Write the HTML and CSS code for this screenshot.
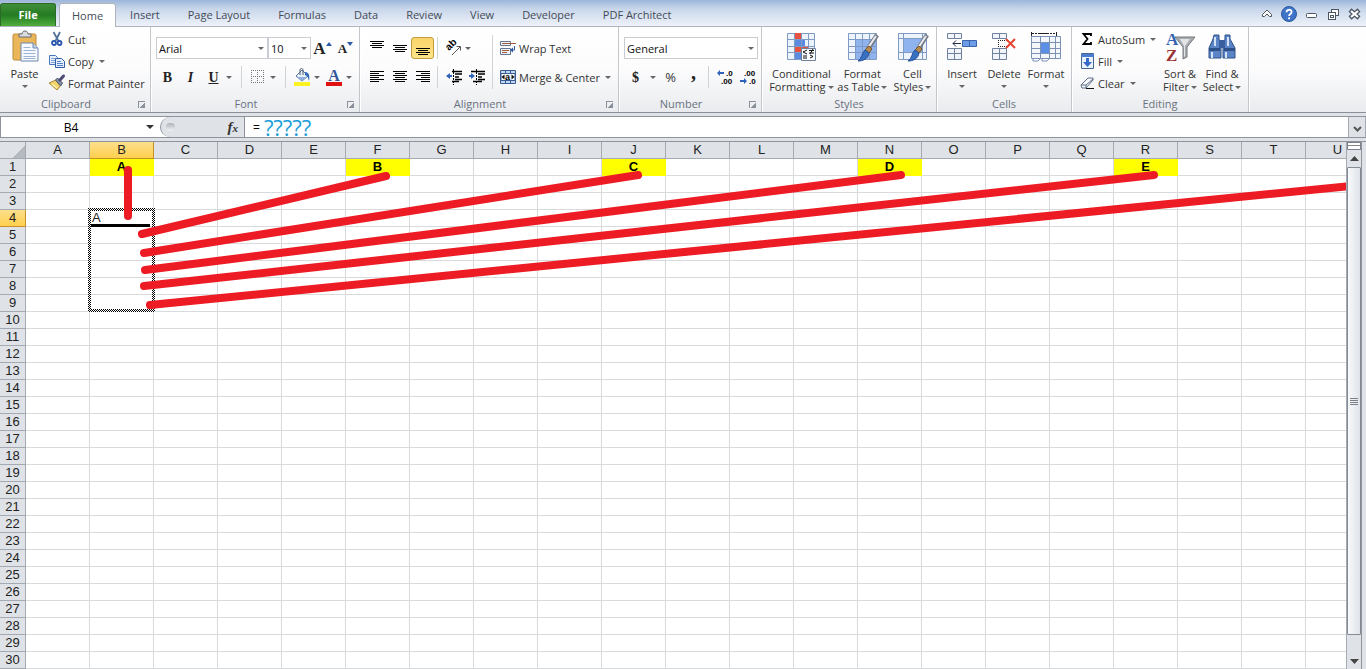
FILE: index.html
```html
<!DOCTYPE html>
<html lang="en">
<head>
    <meta charset="UTF-8">
    <meta name="viewport" content="width=device-width, initial-scale=1.0">
    <title>Spreadsheet</title>
    <link rel="stylesheet" href="styles.css">
</head>
<body>
    <!-- Tabs -->
    <nav class="tabs">
        <button class="file">File</button>
        <button class="tab active">Home</button>
        <button class="tab">Insert</button>
        <button class="tab">Page Layout</button>
        <button class="tab">Formulas</button>
        <button class="tab">Data</button>
        <button class="tab">Review</button>
        <button class="tab">View</button>
        <button class="tab">Developer</button>
        <button class="tab">PDF Architect</button>
        <div class="window-tools">
            <button aria-label="Minimize ribbon"><svg width="16" height="16" viewBox="0 0 16 16"><path d="M3.500 8.500L8 4l4.500 4.500v2h-2L8 8l-2.500 2.500h-2z" fill="#fff" stroke="#4c5663"/></svg></button>
            <button aria-label="Help"><svg width="16" height="16" viewBox="0 0 16 16"><circle cx="8" cy="8" r="7.500" fill="#3f74c9" stroke="#2b57a0"/><path d="M5.500 6.200C5.500 3 10.600 3 10.600 6c0 2-2.500 2-2.500 4" fill="none" stroke="#fff" stroke-width="1.800"/><circle cx="8.100" cy="12.300" r="1.100" fill="#fff"/></svg></button>
            <button aria-label="Minimize"><svg width="16" height="16" viewBox="0 0 16 16"><rect x="3.500" y="7.500" width="10" height="4" rx="1" fill="#fff" stroke="#4c5663"/></svg></button>
            <button aria-label="Restore"><svg width="16" height="16" viewBox="0 0 16 16"><rect x="6.500" y="3.500" width="7" height="6" fill="#fff" stroke="#4c5663"/><rect x="3.500" y="6.500" width="7" height="7" fill="#fff" stroke="#4c5663"/><rect x="5.500" y="9.500" width="3" height="2" fill="none" stroke="#4c5663"/></svg></button>
            <button aria-label="Close"><svg width="16" height="16" viewBox="0 0 16 16"><path d="M3 4l9 8M12 4l-9 8" stroke="#4c5663" stroke-width="4.500"/><path d="M4 5l7 6M11 5l-7 6" stroke="#fff" stroke-width="2.200"/></svg></button>
        </div>
    </nav>

    <!-- Ribbon -->
    <div class="ribbon">
        <section class="group clipboard">
            <div class="group-body">
                <button class="big paste">
                    <svg width="32" height="32" viewBox="0 0 32 32"><rect x="4" y="3" width="23" height="26" rx="1.500" fill="#eab65a" stroke="#bd8a38"/><path d="M10 6V3h3c0-4 6-4 6 0h3v3z" fill="#d9dde2" stroke="#686d75"/><path d="M12 12h12l5 5v13H12z" fill="#f6faff" stroke="#6c87ae"/><path d="M24 12v5h5" fill="#c3d4ec" stroke="#6c87ae"/><path d="M14.500 16.500h7M14.500 19.500h12M14.500 22.500h12M14.500 25.500h12M14.500 27.500h12" stroke="#9cb3d3"/></svg>
                    <span>Paste</span><i class="caret"></i>
                </button>
                <div class="stack">
                    <button class="small"><svg width="16" height="16" viewBox="0 0 16 16"><path d="M4.500 1l5 9M11 1L6.500 10" stroke="#53749f" stroke-width="1.800"/><circle cx="5" cy="12" r="2" fill="none" stroke="#2854ad" stroke-width="1.800"/><circle cx="10.500" cy="12" r="2" fill="none" stroke="#2854ad" stroke-width="1.800"/></svg>Cut</button>
                    <button class="small"><svg width="16" height="16" viewBox="0 0 16 16"><path d="M.5 2.500h6l2 2v7h-8z" fill="#e6f0fd" stroke="#4a74b8"/><path d="M2 5.500h4M2 7.500h4M2 9.500h4" stroke="#7fa2d8"/><path d="M6.500 5.500h6l3 3v6h-9z" fill="#e6f0fd" stroke="#2f5da6"/><path d="M8 8.500h4M8 10.500h6M8 12.500h6" stroke="#5683c8"/></svg>Copy<i class="caret"></i></button>
                    <button class="small"><svg width="16" height="16" viewBox="0 0 16 16"><path d="M0 8l7-3 5 5-4 5z" fill="#f3d567" stroke="#a7883a"/><path d="M3 9l5 4" stroke="#fff3b5" stroke-width="1.500"/><path d="M6.500 5l2-2 5 5-2 3z" fill="#8490a5" stroke="#48546b"/><path d="M11 5l3.500-4" stroke="#4e4a76" stroke-width="3" stroke-linecap="round"/></svg>Format Painter</button>
                </div>
            </div>
            <h2>Clipboard</h2><button class="launcher" aria-label="Clipboard options"></button>
        </section>

        <section class="group font">
            <div class="group-body rows">
                <div class="row">
                    <label class="combo font-name"><select aria-label="Font"><option>Arial</option></select><i class="caret"></i></label>
                    <label class="combo font-size"><select aria-label="Font size"><option>10</option></select><i class="caret"></i></label>
                    <button class="tool serif grow" aria-label="Grow font">A<svg width="6" height="4" viewBox="0 0 6 4"><path d="M0 4l3-4 3 4z" fill="#2d5aa8"/></svg></button>
                    <button class="tool serif shrink" aria-label="Shrink font">A<svg width="6" height="4" viewBox="0 0 6 4"><path d="M0 0l3 4 3-4z" fill="#2d5aa8"/></svg></button>
                </div>
                <div class="row">
                    <button class="tool serif"><b>B</b></button>
                    <button class="tool serif"><em>I</em></button>
                    <button class="tool serif"><u>U</u></button>
                    <i class="caret"></i>
                    <span class="sep"></span>
                    <button class="tool" aria-label="Borders"><svg width="14" height="14" viewBox="0 0 14 14"><path d="M.5 0v14M6.500 0v14M12.500 0v14M0 .5h14M0 6.500h14M0 12.500h14" stroke="#777" stroke-dasharray="1 1"/></svg></button>
                    <i class="caret"></i>
                    <span class="sep"></span>
                    <button class="tool" aria-label="Fill color"><svg width="18" height="18" viewBox="0 0 18 18"><path d="M3 8l6-6 6 6-6 5z" fill="#e8eff9" stroke="#56749f"/><path d="M5 9h9l-5 4z" fill="#8eafdf"/><path d="M7 7V2c0-2 3-2 3 0v5" fill="none" stroke="#4d5b70"/><path d="M12 4c4 0 5 4 4 9-1-3-1-5-4-6z" fill="#2e65b8"/><path d="M1 14h16v4H1z" fill="#fbf223"/></svg></button>
                    <i class="caret"></i>
                    <button class="tool serif font-color" aria-label="Font color">A</button>
                    <i class="caret"></i>
                </div>
            </div>
            <h2>Font</h2><button class="launcher" aria-label="Font options"></button>
        </section>

        <section class="group alignment">
            <div class="group-body">
                <div class="rows">
                    <div class="row">
                        <button class="tool" aria-label="Top align"><svg width="16" height="16" viewBox="0 0 16 16"><path d="M1 1.500h14M3 3.500h10M1 5.500h14M3 7.500h10" stroke="#000"/></svg></button>
                        <button class="tool" aria-label="Middle align"><svg width="16" height="16" viewBox="0 0 16 16"><path d="M1 5.500h14M3 7.500h10M1 9.500h14M3 11.500h10" stroke="#000"/></svg></button>
                        <button class="tool pressed" aria-label="Bottom align"><svg width="16" height="16" viewBox="0 0 16 16"><path d="M1 8.500h14M3 10.500h10M1 12.500h14M3 14.500h10" stroke="#000"/></svg></button>
                        <span class="sep"></span>
                        <button class="tool" aria-label="Orientation"><svg width="16" height="16" viewBox="0 0 16 16"><text x="3" y="11" transform="rotate(-45 3 11)" class="ab">ab</text><path d="M6 15l8-8M10.500 6.500H14.500V10.500" fill="none" stroke="#555"/></svg></button>
                        <i class="caret"></i>
                    </div>
                    <div class="row">
                        <button class="tool" aria-label="Align left"><svg width="16" height="16" viewBox="0 0 16 16"><path d="M1 2.500h14M1 4.500h9M1 6.500h14M1 8.500h9M1 10.500h14M1 12.500h9" stroke="#000"/></svg></button>
                        <button class="tool" aria-label="Center"><svg width="16" height="16" viewBox="0 0 16 16"><path d="M1 2.500h14M3 4.500h10M1 6.500h14M3 8.500h10M1 10.500h14M3 12.500h10" stroke="#000"/></svg></button>
                        <button class="tool" aria-label="Align right"><svg width="16" height="16" viewBox="0 0 16 16"><path d="M1 2.500h14M6 4.500h9M1 6.500h14M6 8.500h9M1 10.500h14M6 12.500h9" stroke="#000"/></svg></button>
                        <span class="sep"></span>
                        <button class="tool" aria-label="Decrease indent"><svg width="16" height="16" viewBox="0 0 16 16"><path d="M7.500 0v16" stroke="#000" stroke-dasharray="2 1"/><path d="M6 2.500h10M9 5h7M9 8h4M9 10.500h7M6 12.500h7" stroke="#000" stroke-width="1.500"/><path d="M0 7l4-3v2h2v2H4v2z" fill="#2f62bd"/></svg></button>
                        <button class="tool" aria-label="Increase indent"><svg width="16" height="16" viewBox="0 0 16 16"><path d="M7.500 0v16" stroke="#000" stroke-dasharray="2 1"/><path d="M2 2.500h14M9 5h7M9 8h4M9 10.500h7M4 12.500h9" stroke="#000" stroke-width="1.500"/><path d="M6 7L2 4v2H0v2h2v2z" fill="#2f62bd"/></svg></button>
                    </div>
                </div>
                <span class="sep tall"></span>
                <div class="rows">
                    <div class="row"><button class="small"><svg width="16" height="16" viewBox="0 0 16 16"><path d="M.5 1.500h10v4H.5zM.5 8.500h10v6H.5z" fill="#eef3fa" stroke="#64758f"/><path d="M2 3.500h14M2 10.500h7M2 12.500h5" stroke="#a45b39"/><path d="M14.500 6v4h-2" fill="none" stroke="#2b59a5"/><path d="M13 7.500v5L10 10z" fill="#2b59a5"/></svg>Wrap Text</button></div>
                    <div class="row"><button class="small"><svg width="16" height="16" viewBox="0 0 16 16"><path d="M.5 1.500h15v13H.5z" fill="#c5d8f3" stroke="#385b91"/><path d="M5.500 1v3M10.500 1v3M5.500 12v3M10.500 12v3" stroke="#385b91"/><path d="M1 4.500h14v7H1z" fill="#f7faff" stroke="#385b91"/><path d="M1.500 8l3-2.500v5zM14.500 8l-3-2.500v5z" fill="#111"/><text x="5" y="11" class="mini">a</text></svg>Merge &amp; Center<i class="caret"></i></button></div>
                </div>
            </div>
            <h2>Alignment</h2><button class="launcher" aria-label="Alignment options"></button>
        </section>

        <section class="group number">
            <div class="group-body rows">
                <div class="row"><label class="combo format"><select aria-label="Number format"><option>General</option></select><i class="caret"></i></label></div>
                <div class="row">
                    <button class="tool serif"><b>$</b></button>
                    <i class="caret"></i>
                    <button class="tool percent">%</button>
                    <button class="tool serif comma"><b>,</b></button>
                    <span class="sep"></span>
                    <button class="tool" aria-label="Increase decimal"><svg width="16" height="16" viewBox="0 0 16 16"><text x="9" y="7" class="dec">.0</text><text x="4" y="15" class="dec">.00</text><path d="M0 4l3-3v2h4v2H3v2z" fill="#2f62bd"/></svg></button>
                    <button class="tool" aria-label="Decrease decimal"><svg width="16" height="16" viewBox="0 0 16 16"><text x="4" y="7" class="dec">.00</text><text x="9" y="15" class="dec">.0</text><path d="M7 12L4 9v2H0v2h4v2z" fill="#2f62bd"/></svg></button>
                </div>
            </div>
            <h2>Number</h2><button class="launcher" aria-label="Number options"></button>
        </section>

        <section class="group styles">
            <div class="group-body">
                <button class="big">
                    <svg width="32" height="32" viewBox="0 0 32 32"><path d="M2.500 2.500h27v26h-27z" fill="#eef4fc" stroke="#7f9bc4"/><path d="M9 2h7v6H9zM9 15h14v6H9z" fill="#e8503f"/><path d="M9 8h11v7H9zM9 21h7v7H9z" fill="#5b8be0"/><path d="M9.500 2v26M16.500 2v26M23.500 2v26M2 8.500h27M2 15.500h27M2 21.500h27" stroke="#7f9bc4"/><path d="M16.500 17.500h14v12h-14z" fill="#fbfcfe" stroke="#6e7f99"/><path d="M22 19l-4 2 4 2M18 25h4M24 19.500h5M24 22h5M28 18l-3 5M25 24l3 1.500-3 1.500M18 27h4" fill="none" stroke="#111"/></svg>
                    <span>Conditional</span><span>Formatting<i class="caret"></i></span>
                </button>
                <button class="big">
                    <svg width="32" height="32" viewBox="0 0 32 32"><path d="M2.500 2.500h28v26h-28z" fill="#edf4fd" stroke="#7f9bc4"/><path d="M9 9h21v19H9z" fill="#8fb3ee"/><path d="M9.500 2v26M16.500 2v26M23.500 2v26M2 8.500h28M2 15.500h28M2 21.500h28" stroke="#7f9bc4"/><path d="M31 4L22 18" stroke="#747a83" stroke-width="4.500"/><path d="M30 5L22 17" stroke="#eceff3" stroke-width="2"/><path d="M23 15l3 3-3 4-4-3z" fill="#b98949" stroke="#75562e"/><path d="M19 19l4 3c-1 6-6 8-11 8 4-2 4-9 7-11z" fill="#3a70c2" stroke="#24509a"/></svg>
                    <span>Format</span><span>as Table<i class="caret"></i></span>
                </button>
                <button class="big">
                    <svg width="32" height="32" viewBox="0 0 32 32"><path d="M2.500 2.500h28v26h-28z" fill="#edf4fd" stroke="#7f9bc4"/><path d="M7.500 7.500h19v14h-19z" fill="#8fb3ee"/><path d="M7.500 2v26M26.500 2v26M2 7.500h28M2 21.500h28" stroke="#7f9bc4"/><path d="M31 4L22 18" stroke="#747a83" stroke-width="4.500"/><path d="M30 5L22 17" stroke="#eceff3" stroke-width="2"/><path d="M23 15l3 3-3 4-4-3z" fill="#b98949" stroke="#75562e"/><path d="M19 19l4 3c-1 6-6 8-11 8 4-2 4-9 7-11z" fill="#3a70c2" stroke="#24509a"/></svg>
                    <span>Cell</span><span>Styles<i class="caret"></i></span>
                </button>
            </div>
            <h2>Styles</h2>
        </section>

        <section class="group cells">
            <div class="group-body">
                <button class="big">
                    <svg width="32" height="32" viewBox="0 0 32 32"><path d="M1.500 2.500h14v5h-14zM1.500 17.500h14v11h-14zM8.500 2v6M8.500 17v11M2 22.500h13" fill="#f1f5fb" stroke="#6f819d"/><path d="M16.500 9.500h14v6h-14zM23.500 9v6" fill="#6c9be8" stroke="#3b65aa"/><path d="M7 12.500h8M10 9.500l-3 3 3 3" fill="none" stroke="#1d2b44"/></svg>
                    <span>Insert</span><i class="caret"></i>
                </button>
                <button class="big">
                    <svg width="32" height="32" viewBox="0 0 32 32"><path d="M4.500 2.500h14v5h-14zM4.500 17.500h14v11h-14zM11.500 2v6M11.500 17v11M5 22.500h13" fill="#f1f5fb" stroke="#6f819d"/><path d="M10 9.500h9M10 15.500h9M10.500 9v6" stroke="#222" stroke-dasharray="1 1"/><path d="M18 8l9 9M27 8l-9 9" stroke="#e5432f" stroke-width="2"/></svg>
                    <span>Delete</span><i class="caret"></i>
                </button>
                <button class="big">
                    <svg width="32" height="32" viewBox="0 0 32 32"><path d="M1.500 5.500h29v22h-29z" fill="#f4f8fd" stroke="#7b91b5"/><path d="M10 11h9v12h-9z" fill="#5c8fe6"/><path d="M10.500 5v22M19.500 5v22M25.500 5v22M2 11.500h28M2 17.500h8M19 17.500h11M2 22.500h28" stroke="#7b91b5"/><path d="M1.500 1v4M26.500 1v4M9 2.500h10" stroke="#222"/><path d="M2 2.500h24" stroke="#222" stroke-dasharray="2 1"/><path d="M3 28v2h5l2-2M12 28v2h5l2-2" fill="#fff" stroke="#7b91b5"/></svg>
                    <span>Format</span><i class="caret"></i>
                </button>
            </div>
            <h2>Cells</h2>
        </section>

        <section class="group editing">
            <div class="group-body">
                <div class="stack">
                    <button class="small"><svg width="16" height="16" viewBox="0 0 16 16"><path d="M12 5V3H4.500l4 5-4 5H12v-2" fill="none" stroke="#000" stroke-width="1.800"/></svg>AutoSum<i class="caret"></i></button>
                    <button class="small"><svg width="16" height="16" viewBox="0 0 16 16"><path d="M2.500.5h12v15h-12z" fill="#e9f1fd" stroke="#46658f"/><path d="M2 1h13v3H2z" fill="#4a7bd0"/><path d="M7 5h3v4h3l-4.500 5L4 9h3z" fill="#3568c5"/></svg>Fill<i class="caret"></i></button>
                    <button class="small"><svg width="16" height="16" viewBox="0 0 16 16"><path d="M2 10l7-7h5v2l-7 8H3z" fill="#f7f9fc" stroke="#5f6f8a"/><path d="M2 10h5l7-6M7 10v3" fill="none" stroke="#5f6f8a"/><path d="M7 13.500h8" stroke="#111"/></svg>Clear<i class="caret"></i></button>
                </div>
                <button class="big">
                    <svg width="32" height="32" viewBox="0 0 32 32"><path d="M11 6h20l-8 10v10l-4 2V16z" fill="#a9acb0" stroke="#74787d"/><path d="M16 8h10l-5 7v10l-1 1V15z" fill="#e2e4e6"/><text x="2" y="14" class="sort-a">A</text><text x="2" y="30" class="sort-z">Z</text></svg>
                    <span>Sort &amp;</span><span>Filter<i class="caret"></i></span>
                </button>
                <button class="big">
                    <svg width="32" height="32" viewBox="0 0 32 32"><path d="M8 4h5v4l2 6v13H3V17l4-9zM19 4h5v4l5 9v10H17V14l2-6z" fill="#5b84c6" stroke="#2e5088"/><path d="M13 9h6v8h-6z" fill="#3a5f9e"/><path d="M3 17h11v3H3zM18 17h11v3H18z" fill="#2e5088"/><path d="M6 21v6M20 21v6M9 6v9M22 6v9" stroke="#d3e2f7" stroke-width="2"/></svg>
                    <span>Find &amp;</span><span>Select<i class="caret"></i></span>
                </button>
            </div>
            <h2>Editing</h2>
        </section>
    </div>

    <!-- Formula bar -->
    <div class="formula-bar">
        <label class="name-box"><input type="text" value="B4" aria-label="Name box"><i class="caret"></i></label>
        <div class="fx-area"><span class="knob"></span><button class="fx">f<small>x</small></button></div>
        <label class="formula">=<input type="text" value="?????" aria-label="Formula"></label>
        <button class="expand" aria-label="Expand formula bar"><svg width="9" height="6" viewBox="0 0 9 6"><path d="M1 1l3.500 3.500L8 1" fill="none" stroke="#555" stroke-width="2"/></svg></button>
    </div>

    <!-- Sheet -->
    <main class="sheet">
        <div class="grid">
            <table id="cells"></table>
            <svg class="overlay" width="1800" height="527">
                <defs>
                    <pattern id="ants" width="2" height="2" patternUnits="userSpaceOnUse"><path d="M0 0h1v1H0zM1 1h1v1H1z" fill="#000"/><path d="M1 0h1v1H1zM0 1h1v1H0z" fill="#fff"/></pattern>
                </defs>
                <path d="M91 83.500h59" stroke="#000" stroke-width="3"/>
                <path d="M88 66h67v104H88zM91 69v98h61V69z" fill="url(#ants)" fill-rule="evenodd"/>
                <g stroke="#ed1c24" stroke-width="8" stroke-linecap="round">
                    <path d="M128 28v46"/>
                    <path d="M142 92L386 34"/>
                    <path d="M144 111L638 33"/>
                    <path d="M145 128L901 33"/>
                    <path d="M144 144L1154 33"/>
                    <path d="M150 163L1350 44"/>
                </g>
            </svg>
        </div>
        <div class="scrollbar">
            <div class="split"></div>
            <button class="arrow" aria-label="Scroll up"><svg width="9" height="5" viewBox="0 0 9 5"><path d="M0 5l4.500-5L9 5z" fill="#444"/></svg></button>
            <div class="thumb"><span></span></div>
            <button class="arrow down" aria-label="Scroll down"><svg width="9" height="5" viewBox="0 0 9 5"><path d="M0 0l4.500 5L9 0z" fill="#444"/></svg></button>
        </div>
    </main>

    <script src="script.js"></script>
</body>
</html>
```

FILE: styles.css
```css
* {
    box-sizing: border-box;
}
body {
    margin: 0;
    height: 100vh;
    display: flex;
    flex-direction: column;
    overflow: hidden;
    font-family: "Open Sans", "Noto Sans", sans-serif;
    font-size: 11px;
    line-height: 13px;
    color: #333;
    background: #dfe2e6;
}
button {
    padding: 0;
    border: 0;
    background: none;
    font: inherit;
    color: inherit;
    white-space: nowrap;
}
svg {
    flex: none;
    overflow: visible;
}

/* tabs */
.tabs {
    display: flex;
    align-items: flex-end;
    height: 27px;
    flex: none;
    border-bottom: 1px solid #b0b5bd;
    background: linear-gradient(#9db6da, #c9d7eb 35%, #eef2f9);
}
.tab, .file {
    height: 23px;
    padding: 0 14px 1px;
    color: #444b57;
}
.file {
    width: 56px;
    margin-right: 3px;
    border: 1px solid #2b6b25;
    border-bottom: 0;
    border-radius: 3px 3px 0 0;
    background: linear-gradient(#3f8f39, #257b22 50%, #4fae3d);
    color: #fff;
    font-weight: bold;
}
.active {
    height: 24px;
    margin-bottom: -1px;
    padding: 0 12px 1px;
    border: 1px solid #b0b5bd;
    border-bottom: 0;
    border-radius: 3px 3px 0 0;
    background: #fff;
}
.window-tools {
    display: flex;
    gap: 6px;
    margin-left: auto;
    padding: 0 3px 4px 0;
}
.window-tools button, .window-tools svg {
    display: block;
}

/* ribbon */
.ribbon {
    display: flex;
    height: 86px;
    flex: none;
    border-bottom: 1px solid #8a8f98;
    background: linear-gradient(#fff, #fcfcfd 50%, #e9ebee);
}
.group {
    display: grid;
    grid-template-columns: 1fr 18px;
    grid-template-rows: 70px 15px;
    flex: none;
    border-right: 1px solid #c3c6cb;
    box-shadow: 1px 0 #fff;
}
.group-body {
    grid-column: 1 / 3;
    display: flex;
}
.group h2 {
    margin: 0;
    font-size: 11px;
    line-height: 14px;
    font-weight: normal;
    text-align: center;
    color: #6a7280;
}
.styles h2, .cells h2, .editing h2 {
    grid-column: 1 / 3;
}
.launcher {
    width: 7px;
    height: 7px;
    margin: 4px 0 0 6px;
    border-top: 1px solid #8b919b;
    border-left: 1px solid #8b919b;
    background: linear-gradient(135deg, transparent 55%, #8b919b 55%);
}
.clipboard {
    width: 151px;
}
.font {
    width: 209px;
}
.alignment {
    width: 259px;
}
.number {
    width: 143px;
}
.styles {
    width: 175px;
}
.cells {
    width: 135px;
}
.editing {
    width: 177px;
}
.font .group-body, .number .group-body {
    padding-left: 5px;
}
.alignment .group-body {
    padding-left: 5px;
}
.cells .group-body {
    padding-left: 4px;
}
.editing .group-body {
    padding-left: 7px;
}
.styles .group-body {
    padding-left: 5px;
}
.rows {
    display: flex;
    flex-direction: column;
    gap: 7px;
    padding-top: 10px;
}
.row {
    display: flex;
    align-items: center;
    height: 22px;
}
.stack {
    padding-top: 1px;
}
.small {
    display: flex;
    align-items: center;
    gap: 3px;
    height: 22px;
}
.big {
    display: flex;
    flex-direction: column;
    align-items: center;
    width: 42px;
    padding-top: 4px;
}
.big svg {
    margin-bottom: 4px;
}
.big > .caret {
    margin-top: 5px;
}
.big span .caret, .small .caret {
    margin-left: 2px;
}
.paste {
    width: 49px;
}
.styles .big {
    width: 48px;
}
.styles .big:first-child {
    width: 70px;
}
.styles .big:nth-child(2) {
    width: 54px;
}
.editing .stack {
    width: 80px;
}
.caret {
    display: inline-block;
    flex: none;
    vertical-align: 2px;
    border: 3px solid transparent;
    border-top-color: #666;
    border-bottom: 0;
}
.tool {
    display: flex;
    align-items: center;
    justify-content: center;
    width: 23px;
    height: 22px;
    flex: none;
}
.pressed {
    border: 1px solid #c29b3d;
    border-radius: 3px;
    background: linear-gradient(#fbd469, #ffe589);
}
.serif {
    font-family: "Liberation Serif", serif;
    font-size: 14px;
    font-weight: bold;
    color: #222;
}
.grow {
    font-size: 17px;
}
.shrink {
    font-size: 13px;
}
.grow svg, .shrink svg {
    margin-bottom: 8px;
}
.font-color {
    height: 18px;
    width: 16px;
    border-bottom: 4px solid #e01212;
    color: #34579b;
    font-size: 16px;
}
.percent {
    font-size: 13px;
}
.comma {
    padding-bottom: 10px;
    font-size: 20px;
}
.sep {
    width: 1px;
    height: 22px;
    margin: 0 4px 0 3px;
    background: #d0d3d8;
}
.tall {
    height: 54px;
    margin: 8px 7px 0 4px;
}
.font .sep {
    margin: 0 4px 0 7px;
}
.font .caret {
    margin-right: 2px;
}
.font .font-color {
    margin: 0 3px 0 4px;
}
.font .tool + .caret {
    margin-left: 1px;
}
.number .row > .caret {
    margin: 0 3px;
}
.combo {
    position: relative;
    height: 22px;
}
.combo select {
    width: 100%;
    height: 22px;
    padding: 0 2px;
    appearance: none;
    border: 1px solid #c9ccd1;
    border-radius: 0;
    background: #fff;
    font: inherit;
    color: #111;
}
.combo .caret {
    position: absolute;
    right: 4px;
    top: 10px;
    margin: 0;
    pointer-events: none;
}
.font-name {
    width: 112px;
}
.font-size {
    width: 43px;
}
.format {
    width: 134px;
}
.ab {
    font: bold 10px "Liberation Sans", sans-serif;
}
.mini {
    font: bold 9px "Liberation Sans", sans-serif;
}
.dec {
    font: bold 8px "Liberation Sans", sans-serif;
}
.sort-a, .sort-z {
    font: bold 17px "Liberation Serif", serif;
    fill: #3464b0;
}
.sort-z {
    fill: #9c3434;
}

/* formula bar */
.formula-bar {
    display: flex;
    height: 22px;
    margin: 3px 0;
    flex: none;
    border-top: 1px solid #8f949c;
    border-bottom: 1px solid #8f949c;
    background: #fff;
}
.name-box {
    display: flex;
    align-items: center;
    width: 160px;
    border-left: 1px solid #8f949c;
}
.name-box input {
    width: 140px;
    padding: 0;
    border: 0;
    background: none;
    font: inherit;
    font-size: 12px;
    text-align: center;
    color: #000;
}
.name-box .caret {
    margin-left: 5px;
    border-width: 4px 4px 0;
    border-top-color: #333;
}
.fx-area {
    display: flex;
    align-items: center;
    justify-content: space-between;
    width: 85px;
    padding: 0 6px 0 5px;
    border: solid #8f949c;
    border-width: 0 1px;
    border-radius: 11px 0 0 11px;
    background: #dfe2e7;
}
.knob {
    width: 9px;
    height: 8px;
    border-radius: 4px;
    background: linear-gradient(#aeb3ba, #f1f2f4);
}
.fx {
    font: italic bold 15px "Liberation Serif", serif;
}
.fx small {
    font-size: 11px;
}
.formula {
    display: flex;
    align-items: center;
    gap: 4px;
    flex: 1;
    padding-left: 8px;
    font-size: 12px;
    color: #000;
}
.formula input {
    flex: 1;
    height: 20px;
    padding: 0;
    border: 0;
    font: 22px "Open Sans", sans-serif;
    line-height: 20px;
    color: #1b9dd9;
}
.expand {
    width: 18px;
    border: 1px solid #a6abb3;
    border-width: 0 1px;
    background: #dfe2e7;
}

/* sheet */
.sheet {
    display: flex;
    flex: 1;
    min-height: 0;
    border-top: 1px solid #8f949c;
    padding-right: 4px;
}
.grid {
    position: relative;
    flex: 1;
    min-width: 0;
    overflow: hidden;
    background: #fff;
    font-family: "Liberation Sans", Arial, sans-serif;
    font-size: 13px;
}
.grid table {
    width: 0;
    table-layout: fixed;
    border-spacing: 0;
}
.grid th, .grid td {
    height: 17px;
    padding: 0;
    border: solid #d8dadc;
    border-width: 0 1px 1px 0;
    line-height: 16px;
    color: #222;
    overflow: hidden;
}
.grid th {
    width: 64px;
    border-color: #a5aab2;
    background: #dfe2e7;
    font-weight: normal;
}
.grid th:first-child {
    width: 26px;
}
.grid .corner {
    background: linear-gradient(135deg, #dfe2e7 70%, #b5bac1 70%);
}
.grid .selected {
    border-color: #c58f2a;
    background: linear-gradient(#fbdf8c, #ffd04d);
}
.grid td {
    padding-left: 2px;
}
.grid .key {
    padding: 0;
    border-color: #ff0;
    background: #ff0;
    font-weight: bold;
    text-align: center;
    color: #000;
}
.overlay {
    position: absolute;
    left: 0;
    top: 0;
}
.scrollbar {
    display: flex;
    flex-direction: column;
    width: 16px;
    border-right: 1px solid #8f949c;
    border-left: 1px solid #a6abb3;
    background: #dfe2e7;
}
.split {
    height: 8px;
    border: 1px solid #7d838c;
    background: linear-gradient(#fff 2px, #888 2px, #888 3px, #fff 3px);
}
.arrow {
    height: 17px;
    padding-bottom: 4px;
}
.down {
    height: 34px;
    padding: 14px 0 0;
}
.thumb {
    display: flex;
    align-items: center;
    justify-content: center;
    flex: 1;
    border: 1px solid #858b94;
    border-radius: 1px;
    background: linear-gradient(90deg, #f8f9fb, #dfe3e9);
}
.thumb span {
    width: 8px;
    height: 7px;
    background: repeating-linear-gradient(#7b8089 0 1px, transparent 1px 2px);
}
```

FILE: script.js
```js
const columns = 'ABCDEFGHIJKLMNOPQRSTU';
const rowCount = 30;
const values = { B1: 'A', F1: 'B', J1: 'C', N1: 'D', R1: 'E', B4: 'A' };

const table = document.getElementById('cells');

// column letters
const head = table.createTHead().insertRow();
head.innerHTML = '<th class="corner"></th>';
for (const col of columns) {
    head.innerHTML += `<th class="${col === 'B' ? 'selected' : ''}">${col}</th>`;
}

// numbered rows
const body = table.createTBody();
for (let r = 1; r <= rowCount; r++) {
    const row = body.insertRow();
    let html = `<th class="${r === 4 ? 'selected' : ''}">${r}</th>`;
    for (const col of columns) {
        const value = values[col + r] || '';
        html += `<td class="${value && r === 1 ? 'key' : ''}">${value}</td>`;
    }
    row.innerHTML = html;
}
```
